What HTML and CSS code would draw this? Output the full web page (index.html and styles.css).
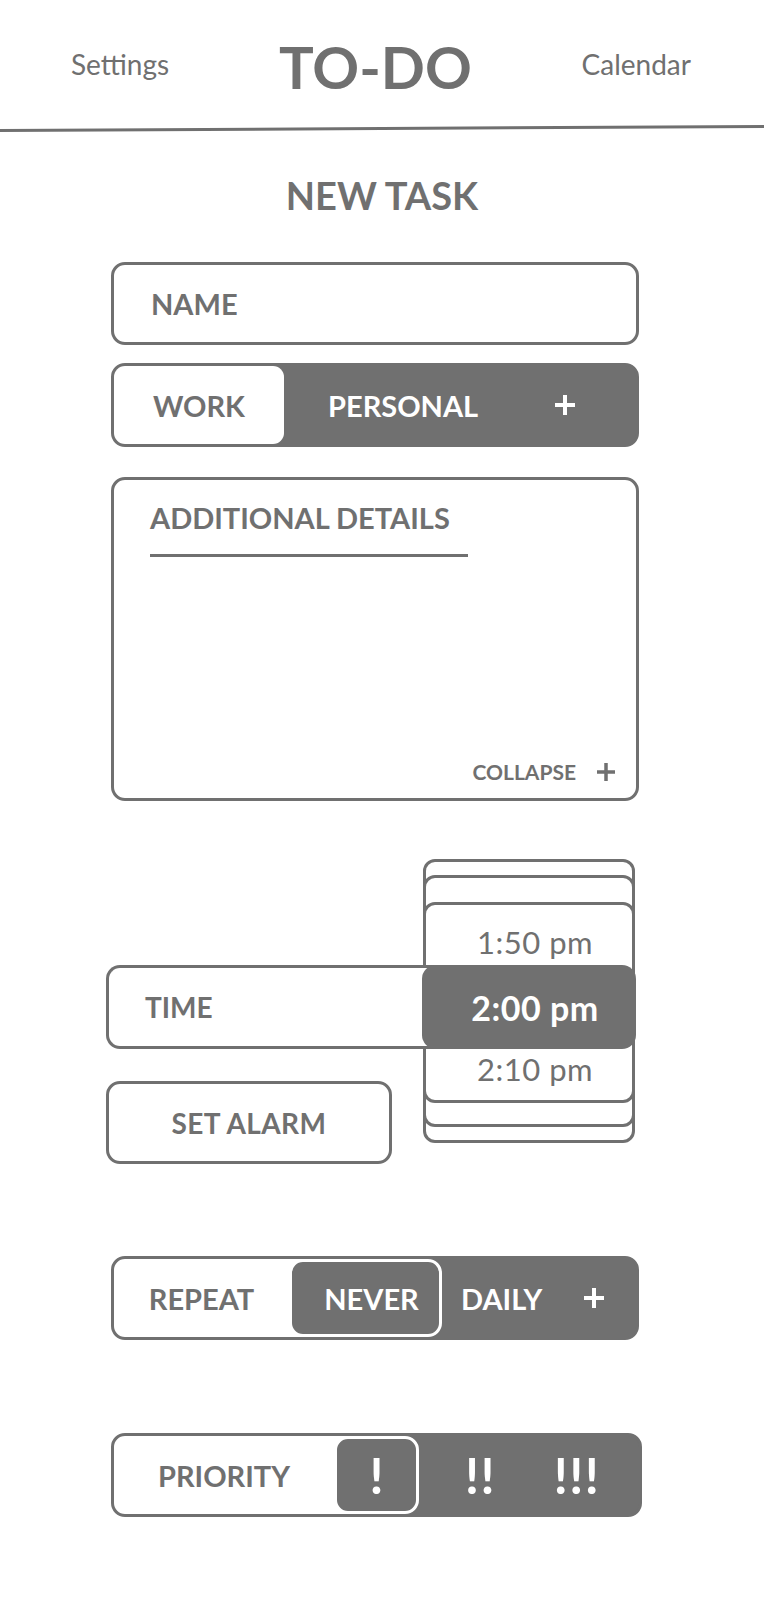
FILE: index.html
```html
<!DOCTYPE html>
<html>
<head>
    <title>TO-DO - New Task</title>
    <link rel="stylesheet" href="styles.css">
</head>
<body>
    <div class="topbar">
        <a href="#" class="nav-link">Settings</a>
        <h1 class="logo">TO-DO</h1>
        <a href="#" class="nav-link">Calendar</a>
    </div>
    <div class="rule"></div>

    <div class="task-form">
        <h2 class="page-title">NEW TASK</h2>

        <div class="field name-field">NAME</div>

        <div class="field segmented category">
            <span class="seg-on">WORK</span>
            <span class="seg-personal">PERSONAL</span>
            <span class="seg-add">
                <svg width="22" height="22" viewBox="0 0 22 22"><path d="M11 1v20M1 11h20" stroke="currentColor" stroke-width="4"/></svg>
            </span>
        </div>

        <div class="field details">
            <div class="details-title">ADDITIONAL DETAILS</div>
            <div class="details-foot">
                COLLAPSE
                <svg width="20" height="20" viewBox="0 0 20 20"><path d="M10 1v18M1 10h18" stroke="currentColor" stroke-width="3.5"/></svg>
            </div>
        </div>

        <div class="time-block">
            <!-- time wheel sits behind the time row -->
            <div class="picker">
                <div class="layer l1"></div>
                <div class="layer l2"></div>
                <div class="layer l3">
                    <span>1:50 pm</span>
                    <span>2:10 pm</span>
                </div>
            </div>
            <div class="time-row">
                <div class="time-label">TIME</div>
                <div class="time-current">2:00 pm</div>
            </div>
            <div class="field alarm">SET ALARM</div>
        </div>

        <div class="field segmented split repeat">
            <span class="seg-label">REPEAT</span>
            <span class="seg-pill never">NEVER</span>
            <span class="seg-daily">DAILY</span>
            <span class="seg-add">
                <svg width="22" height="22" viewBox="0 0 22 22"><path d="M11 1v20M1 11h20" stroke="currentColor" stroke-width="4"/></svg>
            </span>
        </div>

        <div class="field segmented split priority">
            <span class="seg-label">PRIORITY</span>
            <span class="seg-pill bang">!</span>
            <span class="bang bang-two">!!</span>
            <span class="bang bang-three">!!!</span>
        </div>
    </div>
</body>
</html>
```

FILE: styles.css
```css
body {
    margin: 0;
    font-family: Lato, "Open Sans", sans-serif;
    color: #707070;
    background: #fff;
}
.topbar {
    height: 127px;
    display: flex;
    align-items: center;
    justify-content: space-between;
    padding: 0 73px 0 71px;
}
.nav-link {
    font-size: 28px;
    line-height: 28px;
    color: #707070;
    text-decoration: none;
}
.logo {
    margin: 6px 0 0;
    font-size: 58px;
    line-height: 58px;
    font-weight: 700;
}
.rule {
    height: 3px;
    background: #707070;
    transform: rotate(-0.3deg);
}
.task-form {
    width: 528px;
    margin-left: 111px;
    display: flex;
    flex-direction: column;
}
.page-title {
    margin: 46px 0 48px;
    padding-left: 14px;
    text-align: center;
    font-size: 38px;
    line-height: 38px;
    font-weight: 700;
}
.field {
    box-sizing: border-box;
    border: 3px solid #707070;
    border-radius: 14px;
    font-weight: 700;
}
.name-field {
    height: 83px;
    display: flex;
    align-items: center;
    padding-left: 37px;
    font-size: 29px;
}
.segmented {
    height: 84px;
    display: flex;
    background: #707070;
    color: #fff;
    font-size: 29px;
}
.segmented > * {
    display: flex;
    align-items: center;
}
.category {
    margin-top: 18px;
}
.seg-on {
    width: 170px;
    justify-content: center;
    background: #fff;
    color: #707070;
    border-radius: 11px;
}
.seg-personal {
    margin-left: 44px;
}
.seg-add {
    margin-left: auto;
    margin-right: 60px;
}
.details {
    margin-top: 30px;
    height: 324px;
    display: flex;
    flex-direction: column;
}
.details-title {
    width: 318px;
    margin: 23px 0 0 36px;
    padding-bottom: 21px;
    border-bottom: 3px solid #707070;
    font-size: 29px;
    line-height: 30px;
}
.details-foot {
    margin-top: auto;
    align-self: flex-end;
    display: flex;
    align-items: center;
    gap: 20px;
    padding: 0 20px 16px 0;
    font-size: 21px;
    line-height: 21px;
}
.time-block {
    position: relative;
    margin: 58px 0 0 -5px;
    padding-top: 106px;
}
.picker {
    position: absolute;
    top: 0;
    left: 317px;
    width: 212px;
    height: 284px;
}
.layer {
    position: absolute;
    left: 0;
    right: 0;
    border: 3px solid #707070;
    border-radius: 12px;
    background: #fff;
}
.l1 { top: 0; bottom: 0; }
.l2 { top: 16px; bottom: 16px; }
.l3 {
    top: 43px;
    bottom: 40px;
    display: flex;
    flex-direction: column;
    justify-content: space-between;
    align-items: center;
    padding: 21px 0 15px 12px;
    font-size: 31px;
    line-height: 32px;
    letter-spacing: 0.5px;
}
.time-row {
    position: relative;
    z-index: 1;
    width: 530px;
    height: 84px;
    display: flex;
}
.time-label {
    flex: 1;
    display: flex;
    align-items: center;
    margin-right: -14px;
    padding-left: 36px;
    border: 3px solid #707070;
    border-right: 0;
    border-radius: 14px 0 0 14px;
    background: #fff;
    font-size: 28px;
    font-weight: 700;
}
.time-current {
    width: 214px;
    box-sizing: border-box;
    display: flex;
    align-items: center;
    justify-content: center;
    padding-left: 12px;
    border-radius: 14px;
    background: #707070;
    color: #fff;
    font-size: 34px;
    letter-spacing: 0.5px;
    font-weight: 700;
}
.alarm {
    width: 286px;
    height: 83px;
    margin-top: 32px;
    display: flex;
    align-items: center;
    justify-content: center;
    font-size: 28px;
    letter-spacing: 0.4px;
}
.repeat {
    margin-top: 92px;
    background: linear-gradient(90deg, #fff 0 250px, #707070 250px);
}
.seg-label {
    justify-content: center;
    color: #707070;
}
.seg-pill {
    box-sizing: border-box;
    justify-content: center;
    border: 3px solid #fff;
    border-radius: 14px;
    background: #707070;
}
.repeat .seg-label { width: 175px; }
.never {
    width: 153px;
    padding-left: 12px;
}
.seg-daily {
    margin-left: 19px;
}
.repeat .seg-add {
    margin-right: 31px;
}
.priority {
    width: 531px;
    margin-top: 93px;
    background: linear-gradient(90deg, #fff 0 262px, #707070 262px);
}
.priority .seg-label { width: 220px; }
.bang {
    justify-content: center;
    font-size: 50px;
}
.seg-pill.bang {
    width: 85px;
}
.bang-two,
.bang-three {
    letter-spacing: 1.5px;
    padding-left: 1.5px;
}
.bang-two {
    width: 32px;
    margin-left: 44px;
}
.bang-three {
    width: 48px;
    margin-left: 55px;
}
```
